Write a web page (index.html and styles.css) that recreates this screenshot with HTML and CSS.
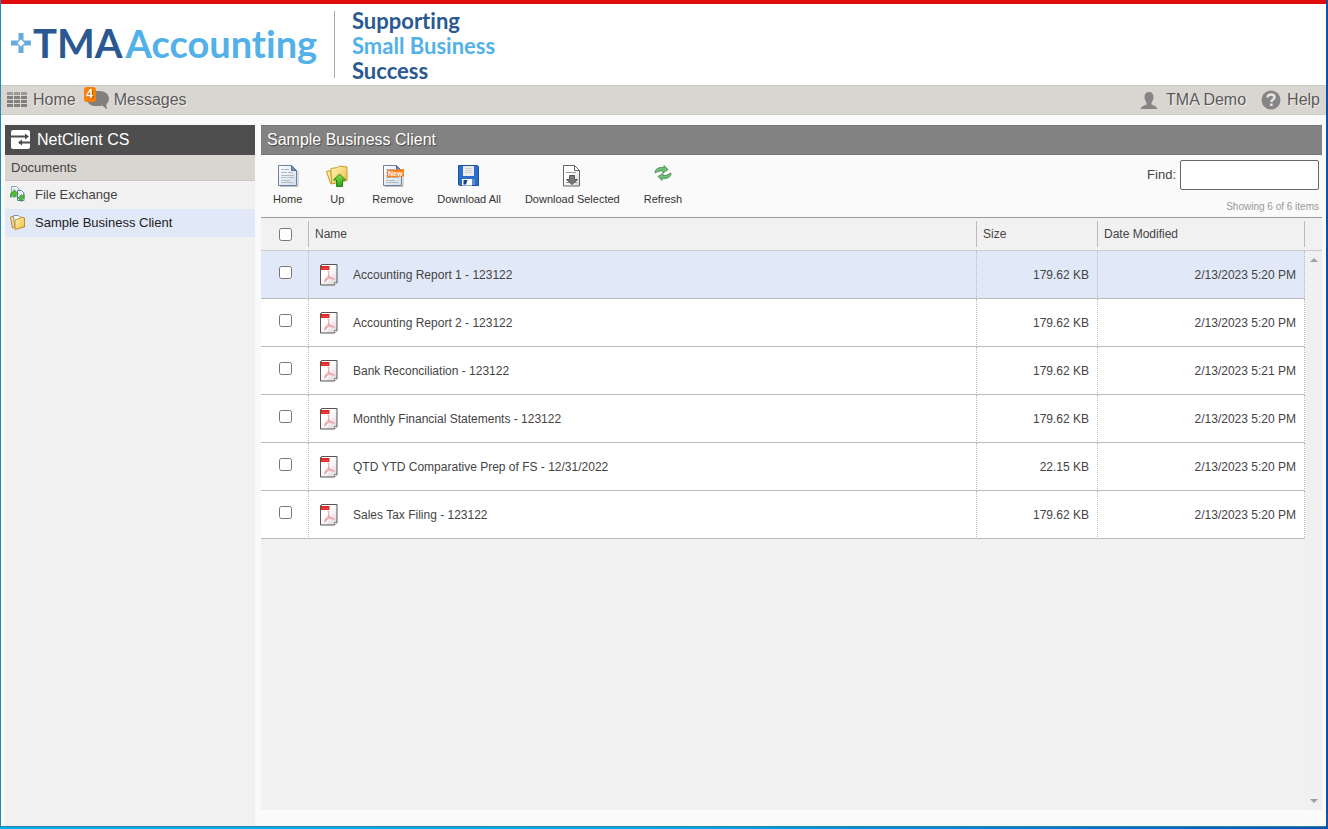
FILE: index.html
```html
<!DOCTYPE html>
<html lang="en">
<head>
    <meta charset="UTF-8">
    <meta name="viewport" content="width=device-width, initial-scale=1.0">
    <title>TMA Accounting - NetClient CS</title>
    <link rel="stylesheet" href="styles.css">
</head>
<body>
    <!-- shared icons -->
    <svg class="defs" width="0" height="0" aria-hidden="true">
        <defs>
            <linearGradient id="paper" x1="0" y1="0" x2="1" y2="1">
                <stop offset="0.4" stop-color="#fff"/>
                <stop offset="1" stop-color="#d4d4d4"/>
            </linearGradient>
            <linearGradient id="bluePaper" x1="0" y1="0" x2="1" y2="1">
                <stop offset="0" stop-color="#fff"/>
                <stop offset="1" stop-color="#cfdcec"/>
            </linearGradient>
            <linearGradient id="folder" x1="0" y1="0" x2="1" y2="1">
                <stop offset="0" stop-color="#fff8b8"/>
                <stop offset="1" stop-color="#efb93e"/>
            </linearGradient>
            <linearGradient id="greenFill" x1="0" y1="0" x2="0" y2="1">
                <stop offset="0" stop-color="#8be04a"/>
                <stop offset="1" stop-color="#2f9e1c"/>
            </linearGradient>
        </defs>
        <symbol id="page" viewBox="0 0 22 22">
            <path d="M3 21.500h18V6" fill="none" stroke="#bbb"/>
            <path d="M1.500 .5h13l5 5v15h-18z" fill="url(#bluePaper)" stroke="#6f819c"/>
            <path d="M14.500 .5v5h5z" fill="#7391b8" stroke="#566f94"/>
            <path d="M4 4.500h8M4 7.500h6M11 7.500h5M4 10.500h13M4 12.500h5M10 12.500h7M4 15.500h9M4 17.500h12" stroke="#b4b9c0"/>
        </symbol>
        <symbol id="pdf" viewBox="0 0 18 22">
            <path d="M.5 1.500h1v-1h15.500v18l-2.500 2.500h-14z" fill="url(#paper)" stroke="#555"/>
            <path d="M14.500 21v-2.500h2.500" fill="#fff" stroke="#888"/>
            <path d="M1 2h8.500v4h-8.500z" fill="#e02a2a"/>
            <path d="M2 4.500h6" stroke="#e85050"/>
            <path d="M7.500 7c2 0 1.500 3 .8 5.500C7.500 15 6 17 4 17.800M8.500 11c1 2.500 3 4.500 6.500 4.200M5 15.500c2-1.500 5-2.200 8.500-1.500" fill="none" stroke="#f5a3aa" stroke-width="1.200"/>
        </symbol>
    </svg>

    <div class="app">
        <header class="brand">
            <a class="logo" href="#">
                <svg width="20" height="20" viewBox="0 0 20 20" aria-hidden="true">
                    <path d="M7.500 0h5v7.500h7.500v5h-7.500v7.500h-5v-7.500H0v-5h7.500z" fill="#68abd9"/>
                    <path d="M10 6.500l3.500 3.500-3.500 3.500L6.500 10z" fill="#fff"/>
                </svg>
                <span class="logo-tma">TMA</span>
                <span class="logo-acc">Accounting</span>
            </a>
            <p class="tagline">
                <span>Supporting</span>
                <span class="light">Small Business</span>
                <span>Success</span>
            </p>
        </header>

        <nav class="topnav">
            <a href="#" class="nav-home">
                <svg width="20" height="16" viewBox="0 0 20 16" aria-hidden="true">
                    <path d="M0 1.500h6M7 1.500h6M14 1.500h6" stroke="#999" stroke-width="3"/>
                    <path d="M0 5.500h6M7 5.500h6M14 5.500h6M0 9.500h6M7 9.500h6M14 9.500h6M0 13.500h6M7 13.500h6M14 13.500h6" stroke="#808080" stroke-width="3"/>
                </svg>
                Home
            </a>
            <a href="#" class="nav-messages">
                <span class="bubble">
                    <svg width="22" height="18" viewBox="0 0 22 18" aria-hidden="true">
                        <path d="M0 4v5c1 4 4 6 9 6h1c3 0 4 0 5.500-.5 1.500 2 3 3 5 3.500-1-1.500-1.500-3-1-5C21 11.500 22 10 22 7.500 22 3.500 18 0 12 0S1 1 0 4z" fill="#837f7c"/>
                    </svg>
                    <span class="badge">4</span>
                </span>
                Messages
            </a>
            <a href="#" class="nav-user">
                <svg width="18" height="17" viewBox="0 0 18 17" aria-hidden="true">
                    <path d="M9 0c3 0 4.500 2 4.500 5S12 9.500 11.500 10.500v2c2 1 5 1.500 6 4.500H.5c1-3 4-3.500 6-4.500v-2C6 9.500 4.500 8 4.500 5S6 0 9 0z" fill="#858585"/>
                </svg>
                TMA Demo
            </a>
            <a href="#" class="nav-help">
                <svg width="20" height="20" viewBox="0 0 20 20" aria-hidden="true">
                    <circle cx="10" cy="10" r="9.500" fill="#858585"/>
                    <path d="M6.500 7.500C6.700 5.500 8 4.500 10 4.500s3.500 1.100 3.500 2.900C13.500 9.500 10.500 9.600 10.300 12" fill="none" stroke="#e6e4e1" stroke-width="2.400"/>
                    <path d="M9 13.500h2.600v2.500h-2.600z" fill="#e6e4e1"/>
                </svg>
                Help
            </a>
        </nav>

        <div class="columns">
            <aside class="sidebar">
                <h2 class="sidebar-title">
                    <svg width="19" height="19" viewBox="0 0 19 19" aria-hidden="true">
                        <rect width="19" height="19" rx="2" fill="#fff"/>
                        <path d="M0 6.500h15M8 12.500h11" stroke="#4e4e4e" stroke-width="2"/>
                        <path d="M14 3.500l4 3-4 3zM11 9.500l-4 3 4 3z" fill="#4e4e4e"/>
                    </svg>
                    NetClient CS
                </h2>
                <h3 class="sidebar-group">Documents</h3>
                <a href="#" class="side-link">
                    <svg width="16" height="16" viewBox="0 0 16 16" aria-hidden="true">
                        <path d="M1.500 .5h5l2.500 2.500v7.500H1.500z" fill="#eef3fa" stroke="#8ea3bf"/>
                        <path d="M7.500 4.500h4l2.500 2.500v7.500H7.500z" fill="#eef3fa" stroke="#5f7da6"/>
                        <path d="M.8 11.500C-.2 8 1 5.500 4 5.500V3.500l4 4-4 4V9C2.500 9 1.500 9.500 .8 11.500z" fill="#4cc034" stroke="#23801a" stroke-width=".6"/>
                        <path d="M13.500 8c1.500 3 .5 5-2 5.500v2l-3.500-3.500 3.500-3.500v2c1.300-.2 1.800-1 2-2.500z" fill="#4cc034" stroke="#23801a" stroke-width=".6"/>
                    </svg>
                    File Exchange
                </a>
                <a href="#" class="side-link active">
                    <svg width="16" height="16" viewBox="0 0 16 16" aria-hidden="true">
                        <path d="M.5 3l4-1 2 10.500-4 1.500z" fill="#f7e08a" stroke="#b08a32"/>
                        <path d="M3.500 1.500h5l2 2v9h-6z" fill="#f8fafc" stroke="#8095b2"/>
                        <path d="M5 6l5-1.500 1-1.500 3.500 1v9l-9.500 2.500z" fill="url(#folder)" stroke="#bf8d24"/>
                    </svg>
                    Sample Business Client
                </a>
            </aside>

            <main class="content">
                <h1 class="content-title">Sample Business Client</h1>
                <div class="toolbar">
                    <button type="button">
                        <svg width="22" height="22" aria-hidden="true"><use href="#page"/></svg>
                        Home
                    </button>
                    <button type="button">
                        <svg width="22" height="22" viewBox="0 0 22 22" aria-hidden="true">
                            <path d="M.5 6.500l4-1 2 12-2 1z" fill="#fbe893" stroke="#c49a36"/>
                            <path d="M5 3.500l6.500-1 1.500-1.500 8 1v13.500l-15.500 3.500z" fill="url(#folder)" stroke="#c99a30"/>
                            <path d="M13.500 9l6 6h-3v6.500h-6v-6.500h-3z" fill="url(#greenFill)" stroke="#26871a"/>
                        </svg>
                        Up
                    </button>
                    <button type="button">
                        <svg width="22" height="22" viewBox="0 0 22 22" aria-hidden="true">
                            <use href="#page"/>
                            <path d="M5 5l17-1v7.500L5 12.500z" fill="#f5821f"/>
                            <text x="6" y="11" class="new-tag">New</text>
                        </svg>
                        Remove
                    </button>
                    <button type="button">
                        <svg width="22" height="22" viewBox="0 0 22 22" aria-hidden="true">
                            <path d="M.5 .5h19l1 1v19H1.500l-1-1z" fill="#2b6fce" stroke="#204f98"/>
                            <path d="M5 1h11v10H5z" fill="#ececec"/>
                            <path d="M7 3.500h7M7 5.500h7M7 7.500h7" stroke="#d0d0d0"/>
                            <path d="M4 14h10v6.500H4z" fill="#fff"/>
                            <path d="M5.500 15h4L8 19.500H5.500z" fill="#1c427c"/>
                            <path d="M14 14h3v6h-3z" fill="#5d8dd0"/>
                        </svg>
                        Download All
                    </button>
                    <button type="button">
                        <svg width="22" height="22" viewBox="0 0 22 22" aria-hidden="true">
                            <path d="M2.500 .5h11l5 5v15.500h-16z" fill="url(#paper)" stroke="#666"/>
                            <path d="M13.500 .5v5h5z" fill="#fff" stroke="#666"/>
                            <path d="M5 7.500h10M5 17.500h11" stroke="#999"/>
                            <path d="M8.500 10.500h5v4h3l-5.500 5-5.500-5h3z" fill="#777" stroke="#555"/>
                        </svg>
                        Download Selected
                    </button>
                    <button type="button">
                        <svg width="22" height="22" viewBox="0 0 22 22" aria-hidden="true">
                            <path d="M3 8C3 3.500 7 2 12 2.500V.5l4 4-5 3.500V6C8 5.500 6 6.500 3 8z" fill="#6fbe74" stroke="#3c8745" stroke-width=".8"/>
                            <path d="M19 8c0 4.500-4 6-9 5.500V15.500l-4-4 5-3v2c3 .5 5-1 8-2.500z" fill="#6fbe74" stroke="#3c8745" stroke-width=".8"/>
                        </svg>
                        Refresh
                    </button>
                    <div class="find">
                        <div class="find-row">
                            <label for="find">Find:</label>
                            <input type="text" id="find">
                        </div>
                        <p class="count">Showing 6 of 6 items</p>
                    </div>
                </div>

                <div class="list">
                    <table class="files">
                        <thead>
                            <tr>
                                <th class="col-check"><input type="checkbox" aria-label="Select all"></th>
                                <th>Name</th>
                                <th class="col-size">Size</th>
                                <th class="col-date">Date Modified</th>
                            </tr>
                        </thead>
                        <tbody>
                            <tr class="selected">
                                <td class="col-check"><input type="checkbox" aria-label="Accounting Report 1 - 123122"></td>
                                <td><a href="#"><svg width="18" height="22"><use href="#pdf"/></svg>Accounting Report 1 - 123122</a></td>
                                <td class="num">179.62 KB</td>
                                <td class="num">2/13/2023 5:20 PM</td>
                            </tr>
                            <tr>
                                <td class="col-check"><input type="checkbox" aria-label="Accounting Report 2 - 123122"></td>
                                <td><a href="#"><svg width="18" height="22"><use href="#pdf"/></svg>Accounting Report 2 - 123122</a></td>
                                <td class="num">179.62 KB</td>
                                <td class="num">2/13/2023 5:20 PM</td>
                            </tr>
                            <tr>
                                <td class="col-check"><input type="checkbox" aria-label="Bank Reconciliation - 123122"></td>
                                <td><a href="#"><svg width="18" height="22"><use href="#pdf"/></svg>Bank Reconciliation - 123122</a></td>
                                <td class="num">179.62 KB</td>
                                <td class="num">2/13/2023 5:21 PM</td>
                            </tr>
                            <tr>
                                <td class="col-check"><input type="checkbox" aria-label="Monthly Financial Statements - 123122"></td>
                                <td><a href="#"><svg width="18" height="22"><use href="#pdf"/></svg>Monthly Financial Statements - 123122</a></td>
                                <td class="num">179.62 KB</td>
                                <td class="num">2/13/2023 5:20 PM</td>
                            </tr>
                            <tr>
                                <td class="col-check"><input type="checkbox" aria-label="QTD YTD Comparative Prep of FS - 12/31/2022"></td>
                                <td><a href="#"><svg width="18" height="22"><use href="#pdf"/></svg>QTD YTD Comparative Prep of FS - 12/31/2022</a></td>
                                <td class="num">22.15 KB</td>
                                <td class="num">2/13/2023 5:20 PM</td>
                            </tr>
                            <tr>
                                <td class="col-check"><input type="checkbox" aria-label="Sales Tax Filing - 123122"></td>
                                <td><a href="#"><svg width="18" height="22"><use href="#pdf"/></svg>Sales Tax Filing - 123122</a></td>
                                <td class="num">179.62 KB</td>
                                <td class="num">2/13/2023 5:20 PM</td>
                            </tr>
                        </tbody>
                    </table>
                    <div class="scroller" aria-hidden="true">
                        <div class="scroller-head"></div>
                        <div class="scroller-track">
                            <svg width="8" height="4" viewBox="0 0 8 4"><path d="M0 4l4-4 4 4z" fill="#a0a0a0"/></svg>
                            <svg width="8" height="4" viewBox="0 0 8 4"><path d="M0 0l4 4 4-4z" fill="#a0a0a0"/></svg>
                        </div>
                    </div>
                </div>
            </main>
        </div>
    </div>
</body>
</html>
```
FILE: styles.css
```css
* {
    box-sizing: border-box;
}
body {
    margin: 0;
    height: 100vh;
    padding: 0 2px 2px 0;
    display: flex;
    font-family: "Liberation Sans", Arial, sans-serif;
    font-size: 12px;
    color: #444;
    background: linear-gradient(to right, #00adef 0%, #00a6ee 50%, #0a5cc4 95%, #0d50b0 100%);
}
h1, h2, h3, p {
    margin: 0;
    font-weight: normal;
}
a {
    color: inherit;
    text-decoration: none;
}
svg {
    display: block;
    flex: none;
}
.defs {
    position: absolute;
}
.app {
    flex: 1;
    min-width: 0;
    display: flex;
    flex-direction: column;
    background: #fafafa;
    border-left: 1px solid #2489ae;
    border-bottom: 1px solid #2784a6;
}

/* logo and tagline */
.brand {
    height: 85px;
    display: flex;
    align-items: center;
    background: #fff;
    border-top: 4px solid #e00b0b;
    font-family: Lato, sans-serif;
    font-weight: bold;
    font-variant-ligatures: none;
}
.logo {
    display: flex;
    align-items: center;
    width: 333px;
    padding: 0 0 4px 10px;
    line-height: 48px;
}
.logo-tma {
    margin-left: 2px;
    font-size: 40px;
    color: #295990;
}
.logo-acc {
    margin-left: 3px;
    font-size: 38px;
    color: #51b1e8;
}
.tagline {
    height: 67px;
    padding: 2px 0 0 17px;
    border-left: 1px solid #aaa;
    display: flex;
    flex-direction: column;
    justify-content: center;
    font-size: 22px;
    font-weight: bold;
    line-height: 25px;
    color: #295990;
}
.tagline .light {
    color: #51b1e8;
}

/* grey navigation bar */
.topnav {
    height: 30px;
    padding: 0 6px;
    display: flex;
    align-items: center;
    background: #d9d6d1;
    border-top: 1px solid #cdcac5;
    border-bottom: 1px solid #cdcac5;
    font-size: 16px;
    color: #5a5a5a;
    text-shadow: 1px 1px 0 #f0eeeb;
}
.topnav a {
    display: flex;
    align-items: center;
    gap: 6px;
}
.topnav .nav-messages {
    margin-left: 10px;
    gap: 5px;
}
.nav-user {
    margin-left: auto;
}
.topnav .nav-user {
    gap: 8px;
}
.nav-help {
    margin-left: 15px;
}
.bubble {
    position: relative;
    padding-left: 1px;
}
.badge {
    position: absolute;
    left: -2px;
    top: -4px;
    width: 12px;
    height: 15px;
    border-radius: 3px;
    background: #f98000;
    color: #fff;
    font-size: 12px;
    font-weight: bold;
    line-height: 15px;
    text-align: center;
    text-shadow: 1px 1px 0 #a55a10;
}

.columns {
    flex: 1;
    min-height: 0;
    display: flex;
    gap: 6px;
    padding: 10px 4px 0;
}

/* left menu */
.sidebar {
    width: 250px;
    flex: none;
    background: #f1f1f1;
    font-size: 13px;
}
.sidebar-title {
    height: 30px;
    padding: 0 6px 1px;
    display: flex;
    align-items: center;
    gap: 7px;
    background: #4e4e4e;
    color: #fff;
    font-size: 16px;
}
.sidebar-group {
    height: 26px;
    padding: 0 6px;
    background: #d9d6d1;
    border-bottom: 1px solid #cdcac5;
    font-size: 13px;
    line-height: 25px;
}
.side-link {
    height: 28px;
    padding: 0 5px 2px;
    display: flex;
    align-items: center;
    gap: 9px;
}
.side-link.active {
    background: #e1e8f7;
    color: #222;
}

/* document list */
.content {
    flex: 1;
    min-width: 0;
    display: flex;
    flex-direction: column;
    margin-bottom: 16px;
}
.content-title {
    height: 30px;
    padding: 0 6px;
    background: #828282;
    border: 1px solid #777;
    border-width: 1px 0;
    color: #fff;
    font-size: 16px;
    line-height: 28px;
    text-shadow: 1px 1px 1px #444;
}
.toolbar {
    height: 62px;
    display: flex;
    align-items: flex-start;
}
.toolbar button {
    padding: 10px 12px 0;
    border: 0;
    background: none;
    display: flex;
    flex-direction: column;
    align-items: center;
    gap: 5px;
    font-family: inherit;
    font-size: 11px;
    line-height: 14px;
    color: #333;
    cursor: pointer;
}
.new-tag {
    font-size: 7px;
    font-weight: bold;
    fill: #fff;
}
.find {
    margin-left: auto;
    padding: 5px 3px 0 0;
}
.find-row {
    display: flex;
    align-items: center;
    gap: 4px;
    font-size: 13px;
}
.find label {
    padding-bottom: 2px;
}
.find input {
    width: 139px;
    height: 30px;
    padding: 0 4px;
    border: 1px solid #666;
    border-radius: 2px;
    background: #fff;
    font: inherit;
}
.count {
    margin-top: 11px;
    font-size: 10px;
    line-height: 12px;
    text-align: right;
    color: #999;
}
.list {
    flex: 1;
    min-height: 0;
    display: flex;
    align-items: flex-start;
    background: #f1f1f1;
    border-top: 1px solid #999;
}
.files {
    flex: 1;
    table-layout: fixed;
    border-collapse: separate;
    border-spacing: 0;
}
.files th {
    height: 33px;
    padding: 0 6px;
    font-weight: normal;
    text-align: left;
    border-bottom: 1px solid #ccc;
    background: linear-gradient(#bbb, #bbb) right 3px / 1px 26px no-repeat;
}
.files td {
    height: 48px;
    padding: 0 8px 0 11px;
    background: #fff;
    border-right: 1px dotted #bbb;
    border-bottom: 1px solid #bbb;
}
.files .selected td {
    background: #e1e8f7;
}
.files .col-check {
    width: 48px;
    padding: 0 0 4px 1px;
    text-align: center;
}
.files th.col-check {
    padding: 0;
}
.files input {
    display: block;
    width: 13px;
    height: 13px;
    margin: 0 auto;
}
.files .col-size {
    width: 121px;
}
.files .col-date {
    width: 207px;
}
.files td a {
    display: flex;
    align-items: center;
    gap: 15px;
}
.files .num {
    text-align: right;
}
.scroller {
    width: 17px;
    align-self: stretch;
    display: flex;
    flex-direction: column;
}
.scroller-head {
    height: 33px;
    border-bottom: 1px solid #ccc;
}
.scroller-track {
    flex: 1;
    padding: 7px 0;
    display: flex;
    flex-direction: column;
    align-items: center;
    justify-content: space-between;
    background: #f0f0f0;
}
```
